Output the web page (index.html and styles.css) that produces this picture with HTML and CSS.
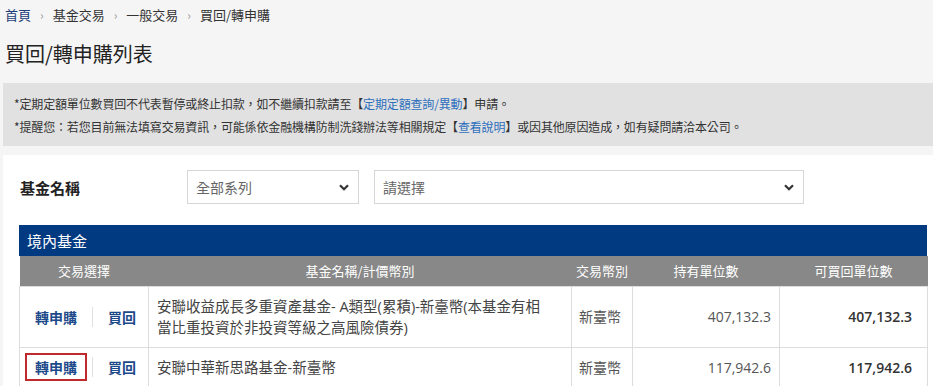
FILE: index.html
```html
<!DOCTYPE html>
<html lang="zh-TW">
<head>
<meta charset="utf-8">
<title>買回/轉申購列表</title>
<link rel="stylesheet" href="styles.css">
</head>
<body>
<nav class="breadcrumb">
  <a class="crumb-home" href="#">首頁</a>
  <span class="sep">›</span>
  <span>基金交易</span>
  <span class="sep">›</span>
  <span>一般交易</span>
  <span class="sep">›</span>
  <span>買回/轉申購</span>
</nav>
<h1 class="title">買回/轉申購列表</h1>
<div class="notice">
  <p>*定期定額單位數買回不代表暫停或終止扣款，如不繼續扣款請至【<a href="#">定期定額查詢/異動</a>】申請。</p>
  <p>*提醒您：若您目前無法填寫交易資訊，可能係依金融機構防制洗錢辦法等相關規定【<a href="#">查看說明</a>】或因其他原因造成，如有疑問請洽本公司。</p>
</div>
<section class="panel">
  <div class="filter">
    <div class="filter-label">基金名稱</div>
    <div class="select select-series">
      <span class="select-text">全部系列</span>
      <svg class="chev" width="10" height="7" viewBox="0 0 10 7"><polyline points="1,1.2 5,5.2 9,1.2" fill="none" stroke="#333" stroke-width="2.2"/></svg>
    </div>
    <div class="select select-fund">
      <span class="select-text">請選擇</span>
      <svg class="chev" width="10" height="7" viewBox="0 0 10 7"><polyline points="1,1.2 5,5.2 9,1.2" fill="none" stroke="#333" stroke-width="2.2"/></svg>
    </div>
  </div>
  <div class="fund-table">
    <div class="table-caption">境內基金</div>
    <table>
      <colgroup>
        <col class="c1"><col class="c2"><col class="c3"><col class="c4"><col class="c5">
      </colgroup>
      <thead>
        <tr>
          <th>交易選擇</th>
          <th>基金名稱/計價幣別</th>
          <th>交易幣別</th>
          <th>持有單位數</th>
          <th>可買回單位數</th>
        </tr>
      </thead>
      <tbody>
        <tr class="row-tall">
          <td class="actions">
            <div class="act-wrap">
              <a class="act" href="#">轉申購</a>
              <span class="act-div"></span>
              <a class="act" href="#">買回</a>
            </div>
          </td>
          <td class="name">安聯收益成長多重資產基金- A類型(累積)-新臺幣(本基金有相當比重投資於非投資等級之高風險債券)</td>
          <td class="cur">新臺幣</td>
          <td class="num">407,132.3</td>
          <td class="num strong">407,132.3</td>
        </tr>
        <tr>
          <td class="actions">
            <div class="act-wrap">
              <a class="act act-focus" href="#">轉申購</a>
              <span class="act-div"></span>
              <a class="act" href="#">買回</a>
            </div>
          </td>
          <td class="name">安聯中華新思路基金-新臺幣</td>
          <td class="cur">新臺幣</td>
          <td class="num">117,942.6</td>
          <td class="num strong">117,942.6</td>
        </tr>
      </tbody>
    </table>
  </div>
</section>
</body>
</html>
```

FILE: styles.css
```css
* { box-sizing: border-box; }

body {
  margin: 0;
  background: #f5f5f5;
  color: #333;
  font-family: "Open Sans", "Noto Sans CJK TC", sans-serif;
}

a { text-decoration: none; }

.breadcrumb {
  display: flex;
  align-items: center;
  gap: 9px;
  padding: 6px 5px 0;
  font-family: "Noto Sans CJK TC", sans-serif;
  font-size: 13px;
  line-height: 18px;
  color: #333;
}
.crumb-home { color: #1c3d78; }
.sep { color: #999; font-size: 12px; }

.title {
  margin: 16px 0 0;
  padding-left: 5px;
  font-family: "Noto Sans CJK TC", sans-serif;
  font-size: 20px;
  font-weight: 400;
  line-height: 28px;
  color: #222;
}

.notice {
  margin: 15px 0 0 3px;
  padding: 9px 11px 8px;
  background: #e1e1e1;
  font-family: "Noto Sans CJK TC", sans-serif;
  font-size: 12px;
  line-height: 23px;
  letter-spacing: -0.15px;
  color: #333;
}
.notice p { margin: 0; }
.notice a { color: #2d6fbd; }

.panel {
  margin: 9px 0 0 3px;
  padding: 15px 6px 0 16px;
  background: #fff;
}

.filter {
  display: flex;
  align-items: center;
  height: 34px;
}
.filter-label {
  width: 168px;
  padding-left: 1px;
  font-family: "Noto Sans CJK TC", sans-serif;
  font-size: 15px;
  font-weight: 700;
  color: #222;
}
.select {
  display: flex;
  align-items: center;
  justify-content: space-between;
  height: 34px;
  padding: 0 9px 0 8px;
  border: 1px solid #d6d6d6;
  background: #fff;
}
.select-series { width: 172px; }
.select-fund { width: 430px; margin-left: 15px; }
.select-text {
  font-family: "Noto Sans CJK TC", sans-serif;
  font-size: 14px;
  color: #666;
}
.chev { display: block; }

.fund-table {
  margin-top: 21px;
  width: 908px;
}
.table-caption {
  height: 31px;
  padding-left: 8px;
  background: #023a82;
  color: #fff;
  font-family: "Noto Sans CJK TC", sans-serif;
  font-size: 15px;
  line-height: 31px;
}

table {
  width: 100%;
  border-collapse: collapse;
  table-layout: fixed;
}
.c1 { width: 129px; }
.c2 { width: 423px; }
.c3 { width: 61px; }
.c4 { width: 147px; }
.c5 { width: 148px; }

th {
  height: 30px;
  padding: 0;
  background: #888;
  color: #fff;
  font-family: "Noto Sans CJK TC", sans-serif;
  font-size: 13px;
  font-weight: 400;
  text-align: center;
}

td {
  padding: 9px 8px;
  border: 1px solid #ddd;
  font-size: 14px;
  line-height: 21px;
  color: #444;
  vertical-align: middle;
}
tbody tr { height: 40px; }
tbody tr.row-tall { height: 61px; }

td.actions { padding: 0 0 0 5px; }
.act-wrap {
  display: flex;
  align-items: center;
  gap: 5px;
}
.act {
  display: block;
  padding: 2px 8px;
  border: 2px solid transparent;
  font-family: "Noto Sans CJK TC", sans-serif;
  font-size: 14px;
  font-weight: 700;
  line-height: 20px;
  color: #1d4a8a;
}
.act-focus { border-color: #c0282d; }
.act-div {
  width: 1px;
  height: 20px;
  background: #e0e0e0;
}

td.name {
  padding: 9px 22px 9px 8px;
  font-size: 14.5px;
  color: #444;
}
td.cur {
  padding: 9px 6px 9px 7px;
  font-family: "Noto Sans CJK TC", sans-serif;
  color: #555;
}
td.num {
  text-align: right;
  color: #555;
}
td.num.strong {
  padding-right: 15px;
  font-weight: 600;
  color: #333;
}
```
